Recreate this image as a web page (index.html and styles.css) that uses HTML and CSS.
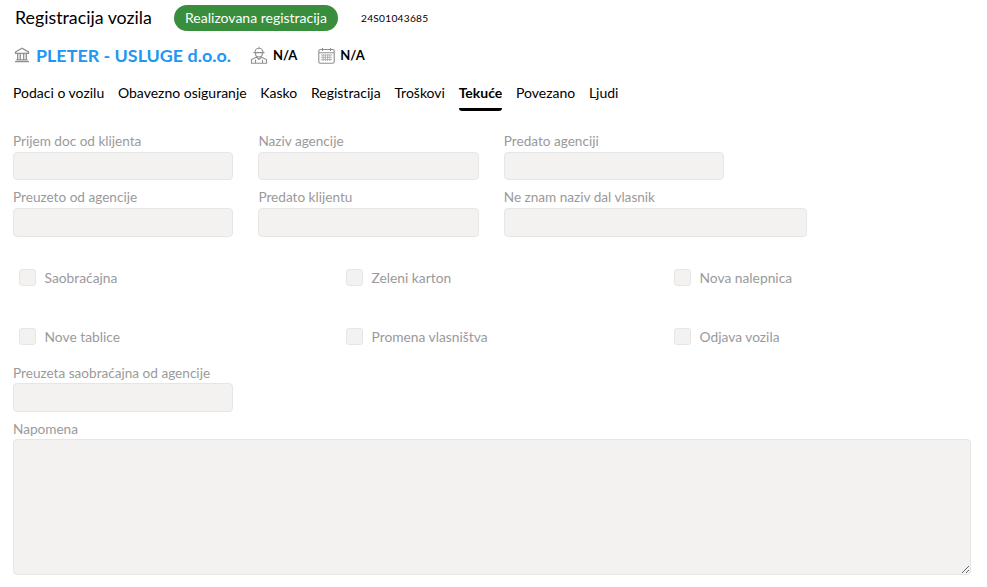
FILE: index.html
```html
<!DOCTYPE html>
<html lang="sr">
<head>
<meta charset="utf-8">
<title>Registracija vozila</title>
<link rel="stylesheet" href="styles.css">
</head>
<body>
<header class="head">
  <h1 class="title">Registracija vozila</h1>
  <span class="badge">Realizovana registracija</span>
  <span class="code">24S01043685</span>
</header>
<div class="client">
  <svg class="ico bank" viewBox="0 0 16 16" aria-hidden="true"><path d="M1.500 5 8 1.300 14.500 5v1.300h-13zM2.300 12.800h11.400M1 14.700h14M3.700 6.800v5.500M6.300 6.800v5.500M9.700 6.800v5.500M12.300 6.800v5.500" fill="none" stroke="#8f8f8f" stroke-width="1.300"/></svg>
  <a class="company">PLETER - USLUGE d.o.o.</a>
  <svg class="ico worker" viewBox="0 0 18 18" aria-hidden="true"><path d="M9 .8v1.700M5 6.300a4 4 0 0 1 8 0M3.500 6.600h11M5.600 6.800v1.500c0 3.500 6.800 3.500 6.800 0V6.800M6.500 11.200 1.500 13.500v3.700h15v-3.700l-5-2.300M5.500 17v-3.200M12.500 17v-3.200M6.500 11.200 9 13.500l2.500-2.300" fill="none" stroke="#8f8f8f" stroke-width="1.100"/></svg>
  <b class="na">N/A</b>
  <svg class="ico cal" viewBox="0 0 17 17" aria-hidden="true"><rect x=".8" y="2.500" width="15.400" height="13.700" rx="1.500" fill="none" stroke="#8f8f8f" stroke-width="1.100"/><path d="M1 5.800h15M4.500 1v3M12.500 1v3" fill="none" stroke="#8f8f8f" stroke-width="1.100"/><path d="M3 8h11M3 10.300h11M3 12.600h11M5.200 7.500v6.500M7.400 7.500v6.500M9.600 7.500v6.500M11.800 7.500v6.500" fill="none" stroke="#aaa" stroke-width=".9"/></svg>
  <b class="na">N/A</b>
</div>
<nav class="tabs">
  <a class="tab">Podaci o vozilu</a>
  <a class="tab">Obavezno osiguranje</a>
  <a class="tab">Kasko</a>
  <a class="tab">Registracija</a>
  <a class="tab">Troškovi</a>
  <a class="tab active">Tekuće</a>
  <a class="tab">Povezano</a>
  <a class="tab">Ljudi</a>
</nav>
<form class="form">
  <div class="fields">
    <label class="field"><span class="lab">Prijem doc od klijenta</span><input class="inp" disabled></label>
    <label class="field"><span class="lab">Naziv agencije</span><input class="inp" disabled></label>
    <label class="field"><span class="lab">Predato agenciji</span><input class="inp" disabled></label>
  </div>
  <div class="fields">
    <label class="field"><span class="lab">Preuzeto od agencije</span><input class="inp" disabled></label>
    <label class="field"><span class="lab">Predato klijentu</span><input class="inp" disabled></label>
    <label class="field wide"><span class="lab">Ne znam naziv dal vlasnik</span><input class="inp" disabled></label>
  </div>
  <div class="checks">
    <label class="check"><span class="box"></span>Saobraćajna</label>
    <label class="check"><span class="box"></span>Zeleni karton</label>
    <label class="check"><span class="box"></span>Nova nalepnica</label>
    <label class="check"><span class="box"></span>Nove tablice</label>
    <label class="check"><span class="box"></span>Promena vlasništva</label>
    <label class="check"><span class="box"></span>Odjava vozila</label>
  </div>
  <label class="field single"><span class="lab tight">Preuzeta saobraćajna od agencije</span><input class="inp" disabled></label>
  <label class="field note"><span class="lab tight">Napomena</span><textarea class="area" disabled></textarea></label>
</form>
</body>
</html>
```
FILE: styles.css
```css
* { box-sizing: border-box; }
html, body { height: 100%; }
body {
  margin: 0;
  padding: 5px 16px 0 13px;
  background: #fff;
  color: #000;
  font-family: Lato, "Open Sans", sans-serif;
  font-size: 14px;
  overflow: hidden;
}
.head { display: flex; align-items: center; height: 26px; padding-left: 2px; }
.title { margin: 0 0 2px; width: 159px; font-size: 17.800px; font-weight: 400; white-space: nowrap; }
.badge {
  width: 164px; height: 26px; line-height: 25px; text-align: center;
  border-radius: 13px; background: #388e3c; color: #fff; font-size: 14px;
  white-space: nowrap;
}
.code { margin-left: 23px; font-size: 10.200px; letter-spacing: .25px; }
.client { display: flex; align-items: center; height: 24px; margin-top: 12px; padding-left: 1px; }
.ico { display: block; flex: none; }
.bank { width: 16px; height: 16px; }
.company { margin-left: 6px; width: 215px; color: #2196f3; font-size: 17.900px; font-weight: 700; white-space: nowrap; }
.worker { width: 18px; height: 18px; margin-left: -1px; }
.cal { width: 17px; height: 17px; margin-left: 21px; }
.na { margin-left: 5px; font-size: 13px; font-weight: 700; }
.tabs { display: flex; gap: 13.700px; height: 33px; margin-top: 12px; }
.tab { position: relative; padding-top: 5px; font-size: 14px; white-space: nowrap; }
.tab.active { font-weight: 700; }
.tab.active::after {
  content: ""; position: absolute; left: 0; right: 0; bottom: 1px; height: 3px;
  border-radius: 0 0 3px 3px; background: #000;
}
.form { display: block; margin-top: 20px; }
.fields { display: flex; gap: 25px; margin-bottom: 8px; }
.field { display: block; width: 220.400px; }
.wide { width: 303px; }
.lab { display: block; height: 20px; line-height: 18px; color: #9a9a9a; font-size: 13.600px; white-space: nowrap; }
.tight { height: 19px; }
.inp, .area {
  display: block; width: 100%; margin: 0; padding: 0;
  border: 1px solid #e6e6e6; border-radius: 4px; background: #f3f2f1;
}
.inp { height: 28.400px; }
.checks {
  display: grid; grid-template-columns: 327px 328px 1fr; grid-auto-rows: 59px;
  margin-top: 32.200px; padding-left: 6px;
}
.check { display: flex; align-items: flex-start; gap: 8.500px; color: #9a9a9a; font-size: 13.800px; line-height: 17px; }
.box { width: 17px; height: 17px; border: 1px solid #e6e6e6; border-radius: 3px; background: #f3f2f1; }
.single { margin-top: -22.700px; }
.note { width: 958px; margin-top: 8.700px; }
.area { height: 136px; resize: both; }
```
